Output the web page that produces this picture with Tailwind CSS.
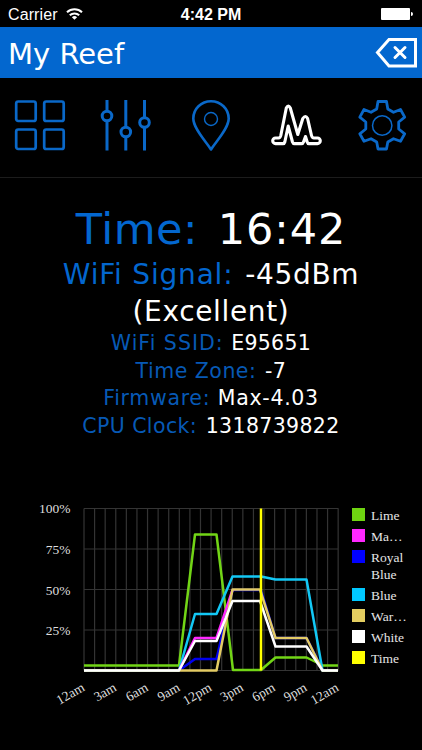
<!DOCTYPE html>
<html lang="en">
<head>
  <meta charset="UTF-8" />
  <meta name="viewport" content="width=device-width, initial-scale=1" />
  <title>My Reef</title>
  <script src="https://cdn.jsdelivr.net/npm/@tailwindcss/browser@4"></script>
</head>
<body class="h-[750px] overflow-hidden bg-black font-['DejaVu_Sans',sans-serif] text-white">
  <!-- Status bar -->
  <div class="grid h-[27px] grid-cols-3 items-center px-2 pt-[3px] font-['Liberation_Sans',sans-serif] text-[16px]">
    <div class="flex items-center gap-2">
      <span class="tracking-[0.1px]">Carrier</span>
      <svg class="-mt-[2px] h-[12px] w-[17px] shrink-0" viewBox="0 0 17 12" fill="none" stroke="white" stroke-width="2">
        <path d="M1 4.3a10.8 10.8 0 0 1 15 0M3.8 7.3a6.8 6.8 0 0 1 9.4 0" />
        <path d="M8.5 11.8L5.9 9.2a3.8 3.8 0 0 1 5.2 0z" fill="white" stroke="none" />
      </svg>
    </div>
    <span class="text-center font-bold whitespace-nowrap">4:42 PM</span>
    <svg class="-mt-[2px] h-[14px] w-[34px] justify-self-end" viewBox="0 0 34 14" fill="white">
      <rect x="1" y="1" width="29" height="12" rx="1" />
      <path d="M31 5q2 0 2 2t-2 2z" />
    </svg>
  </div>

  <!-- Title bar -->
  <header class="flex h-[51px] items-center justify-between bg-[#0367cf] pr-[4px] pl-2">
    <h1 class="pt-[4px] text-[29px] leading-none">My Reef</h1>
    <svg class="h-[32px] w-[43px]" viewBox="0 0 43 32" fill="none" stroke="white" stroke-width="3">
      <path d="M2.5 15.5L14 2.5h26.500v26.500H14z" />
      <path d="M20 10.500l10 10m0-10l-10 10" stroke-linecap="round" />
    </svg>
  </header>

  <!-- Tabs -->
  <nav class="grid h-[100px] grid-cols-[80px_91px_79px_92px_80px] justify-items-center border-b border-[#1c1c1c] pt-[20px]">
    <svg class="h-[54px] w-[54px]" viewBox="0 0 54 54" fill="none" stroke="#0a68c8" stroke-width="2.700">
      <rect x="3.200" y="3.500" width="19.500" height="19.500" rx="2" />
      <rect x="31.200" y="3.500" width="19.500" height="19.500" rx="2" />
      <rect x="3.200" y="31.500" width="19.500" height="19.500" rx="2" />
      <rect x="31.200" y="31.500" width="19.500" height="19.500" rx="2" />
    </svg>
    <svg class="h-[54px] w-[54px]" viewBox="0 0 54 54" fill="none" stroke="#0a68c8" stroke-width="3">
      <path d="M8 2v11M8 23v29.500M26.800 2v27M26.800 39v13.500M45.500 2v17.500M45.500 29.500v23" />
      <circle cx="8" cy="18" r="4.800" />
      <circle cx="26.800" cy="34" r="4.800" />
      <circle cx="45.500" cy="24.500" r="4.800" />
    </svg>
    <svg class="h-[54px] w-[54px]" viewBox="0 0 54 54" fill="none" stroke="#0a68c8" stroke-width="2.600">
      <path d="M27 51.500C22 43.500 9.300 30.500 9.300 20.500a17.700 17.300 0 0 1 35.400 0C44.700 30.500 32 43.500 27 51.500z" stroke-linejoin="round" />
      <circle cx="27" cy="21" r="6.500" stroke-width="1.400" />
    </svg>
    <svg class="h-[54px] w-[54px]" viewBox="0 0 54 54" fill="none" stroke="white" stroke-width="3.100" stroke-linejoin="round">
      <path d="M6.500 40H9.500Q11.200 40 11.800 37.500L17.300 10Q19.300 6 21.300 10L28.800 36.500L33.800 20.500Q36.500 16.500 38.600 20.500L42.500 37.500Q43.100 40 45 40H48.500A2.800 2.800 0 0 1 48.500 45.600H39.800Q38.700 45.600 38.200 44L36.500 38.500L34.500 44Q34 45.600 32.500 45.600H25.500Q24 45.600 23.500 44L19.200 28L15.800 44Q15.400 45.600 14 45.600H6.500A2.800 2.800 0 0 1 6.500 40z" />
    </svg>
    <svg class="h-[54px] w-[54px]" viewBox="0 0 54 54" fill="none" stroke="#0a68c8" stroke-width="2.800" stroke-linejoin="round">
      <path d="M23 3.500H31.500L32.800 11L38.500 14.300L45.500 11.500L49.700 19.200L43.700 24V31L49.700 35.800L45.500 43.300L38.500 40.700L32.800 44L31.500 51H23L21.700 44L16 40.700L9 43.300L4.800 35.800L10.800 31V24L4.800 19.200L9 11.500L16 14.300L21.700 11z" />
      <circle cx="27.200" cy="27.500" r="9.700" stroke-width="1.500" />
    </svg>
  </nav>

  <!-- Controller info -->
  <section class="h-[317px] pt-[24px] text-center whitespace-nowrap">
    <p class="text-[43px] leading-[54px]"><span class="mr-[6px] tracking-[0.5px] text-[#0367cf]">Time:</span> <span class="tracking-[0.9px]">16:42</span></p>
    <p class="text-[28px] leading-[37px]"><span class="mr-[3px] tracking-[0.8px] text-[#0367cf]">WiFi Signal:</span> <span class="tracking-[0.65px]">-45dBm<br />(Excellent)</span></p>
    <div class="text-[20.500px] leading-[27.700px]">
      <p><span class="mr-px tracking-[1px] text-[#0759b5]">WiFi SSID:</span> <span class="tracking-[0.3px]">E95651</span></p>
      <p><span class="mr-[2px] tracking-[0.5px] text-[#0759b5]">Time Zone:</span> <span class="tracking-[0.5px]">-7</span></p>
      <p><span class="mr-px tracking-[0.7px] text-[#0759b5]">Firmware:</span> <span class="tracking-[0.7px]">Max-4.03</span></p>
      <p><span class="mr-[2px] tracking-[0.4px] text-[#0759b5]">CPU Clock:</span> <span class="tracking-[0.35px]">1318739822</span></p>
    </div>
  </section>

  <!-- Light schedule -->
  <section class="flex font-['Liberation_Serif',serif] text-[13px] text-[#e5e5e5]">
    <svg class="h-[225px] w-[352px] shrink-0" viewBox="0 495 352 225" fill="none">
      <g id="grid" stroke="#343434" stroke-width="1.200"></g>
      <g stroke-width="2.500" stroke-linejoin="round">
        <polyline stroke="#0000ee" points="84,670.500 179,670.500 195,659 216.500,659 232.500,590 261,590 275.500,638 306.500,638 323,670.500 338,670.500" />
        <polyline stroke="#72d516" points="84,665.500 179,665.500 195,534.500 216.500,534.500 233,670 261,670 275.500,657.500 306.500,657.500 323,665.500 338,665.500" />
        <polyline stroke="#13c8f5" points="84,670.500 179,670.500 195,614 216.500,614 232.500,576.500 261,576.500 275.500,579.500 306.500,579.500 322.500,670.500 338,670.500" />
        <polyline stroke="#ff28ff" points="179,670.500 195,638 216.500,638 232.500,590" />
        <polyline stroke="#e3cb64" points="84,670.500 216.500,670.500 232.500,589.500 260,589.500 275.500,638 306.500,638 322.500,670.500 338,670.500" />
        <polyline stroke="white" points="84,670.500 179,670.500 195,641 216.500,641 232.500,601 260,601 275.500,646.500 306.500,646.500 322.500,670.500 338,670.500" />
        <path stroke="#ffff00" d="M261 508.500v162" />
      </g>
      <g fill="#dedede" font-size="13.500" text-anchor="end">
        <text x="70.500" y="513">100%</text>
        <text x="70.500" y="554">75%</text>
        <text x="70.500" y="594.500">50%</text>
        <text x="70.500" y="635">25%</text>
      </g>
      <g id="hours" fill="#dedede" font-size="13.500" text-anchor="end"></g>
    </svg>
    <ul class="flex w-[60px] flex-col gap-[4px] pt-[12px] leading-[17px] text-[13.500px]">
      <li class="flex gap-[6px]"><i class="mt-[1px] h-[13px] w-[13px] shrink-0 bg-[#6fd411]"></i>Lime</li>
      <li class="flex gap-[6px]"><i class="mt-[1px] h-[13px] w-[13px] shrink-0 bg-[#ff28ff]"></i>Ma…</li>
      <li class="flex gap-[6px]"><i class="mt-[1px] h-[13px] w-[13px] shrink-0 bg-[#0000ff]"></i>Royal<br />Blue</li>
      <li class="flex gap-[6px]"><i class="mt-[1px] h-[13px] w-[13px] shrink-0 bg-[#00c8ff]"></i>Blue</li>
      <li class="flex gap-[6px]"><i class="mt-[1px] h-[13px] w-[13px] shrink-0 bg-[#e3cd60]"></i>War…</li>
      <li class="flex gap-[6px]"><i class="mt-[1px] h-[13px] w-[13px] shrink-0 bg-white"></i>White</li>
      <li class="flex gap-[6px]"><i class="mt-[1px] h-[13px] w-[13px] shrink-0 bg-[#ffff00]"></i>Time</li>
    </ul>
  </section>

  <script>
    const left = 84, hour = 10.59;

    // one vertical line per hour, one horizontal line per 25%
    let lines = '';
    for (let i = 0; i <= 24; i++) lines += `M${left + i * hour} 508.5V670.5`;
    for (let i = 0; i <= 4; i++) lines += `M84 ${508.5 + i * 40.5}H338.5`;
    document.getElementById('grid').innerHTML = `<path d="${lines}" />`;

    const labels = ['12am', '3am', '6am', '9am', '12pm', '3pm', '6pm', '9pm', '12am'];
    document.getElementById('hours').innerHTML = labels.map((label, i) => {
      const x = left + 1.5 + i * 3 * hour;
      return `<text x="${x}" y="690" transform="rotate(-30 ${x} 690)">${label}</text>`;
    }).join('');
  </script>
</body>
</html>
